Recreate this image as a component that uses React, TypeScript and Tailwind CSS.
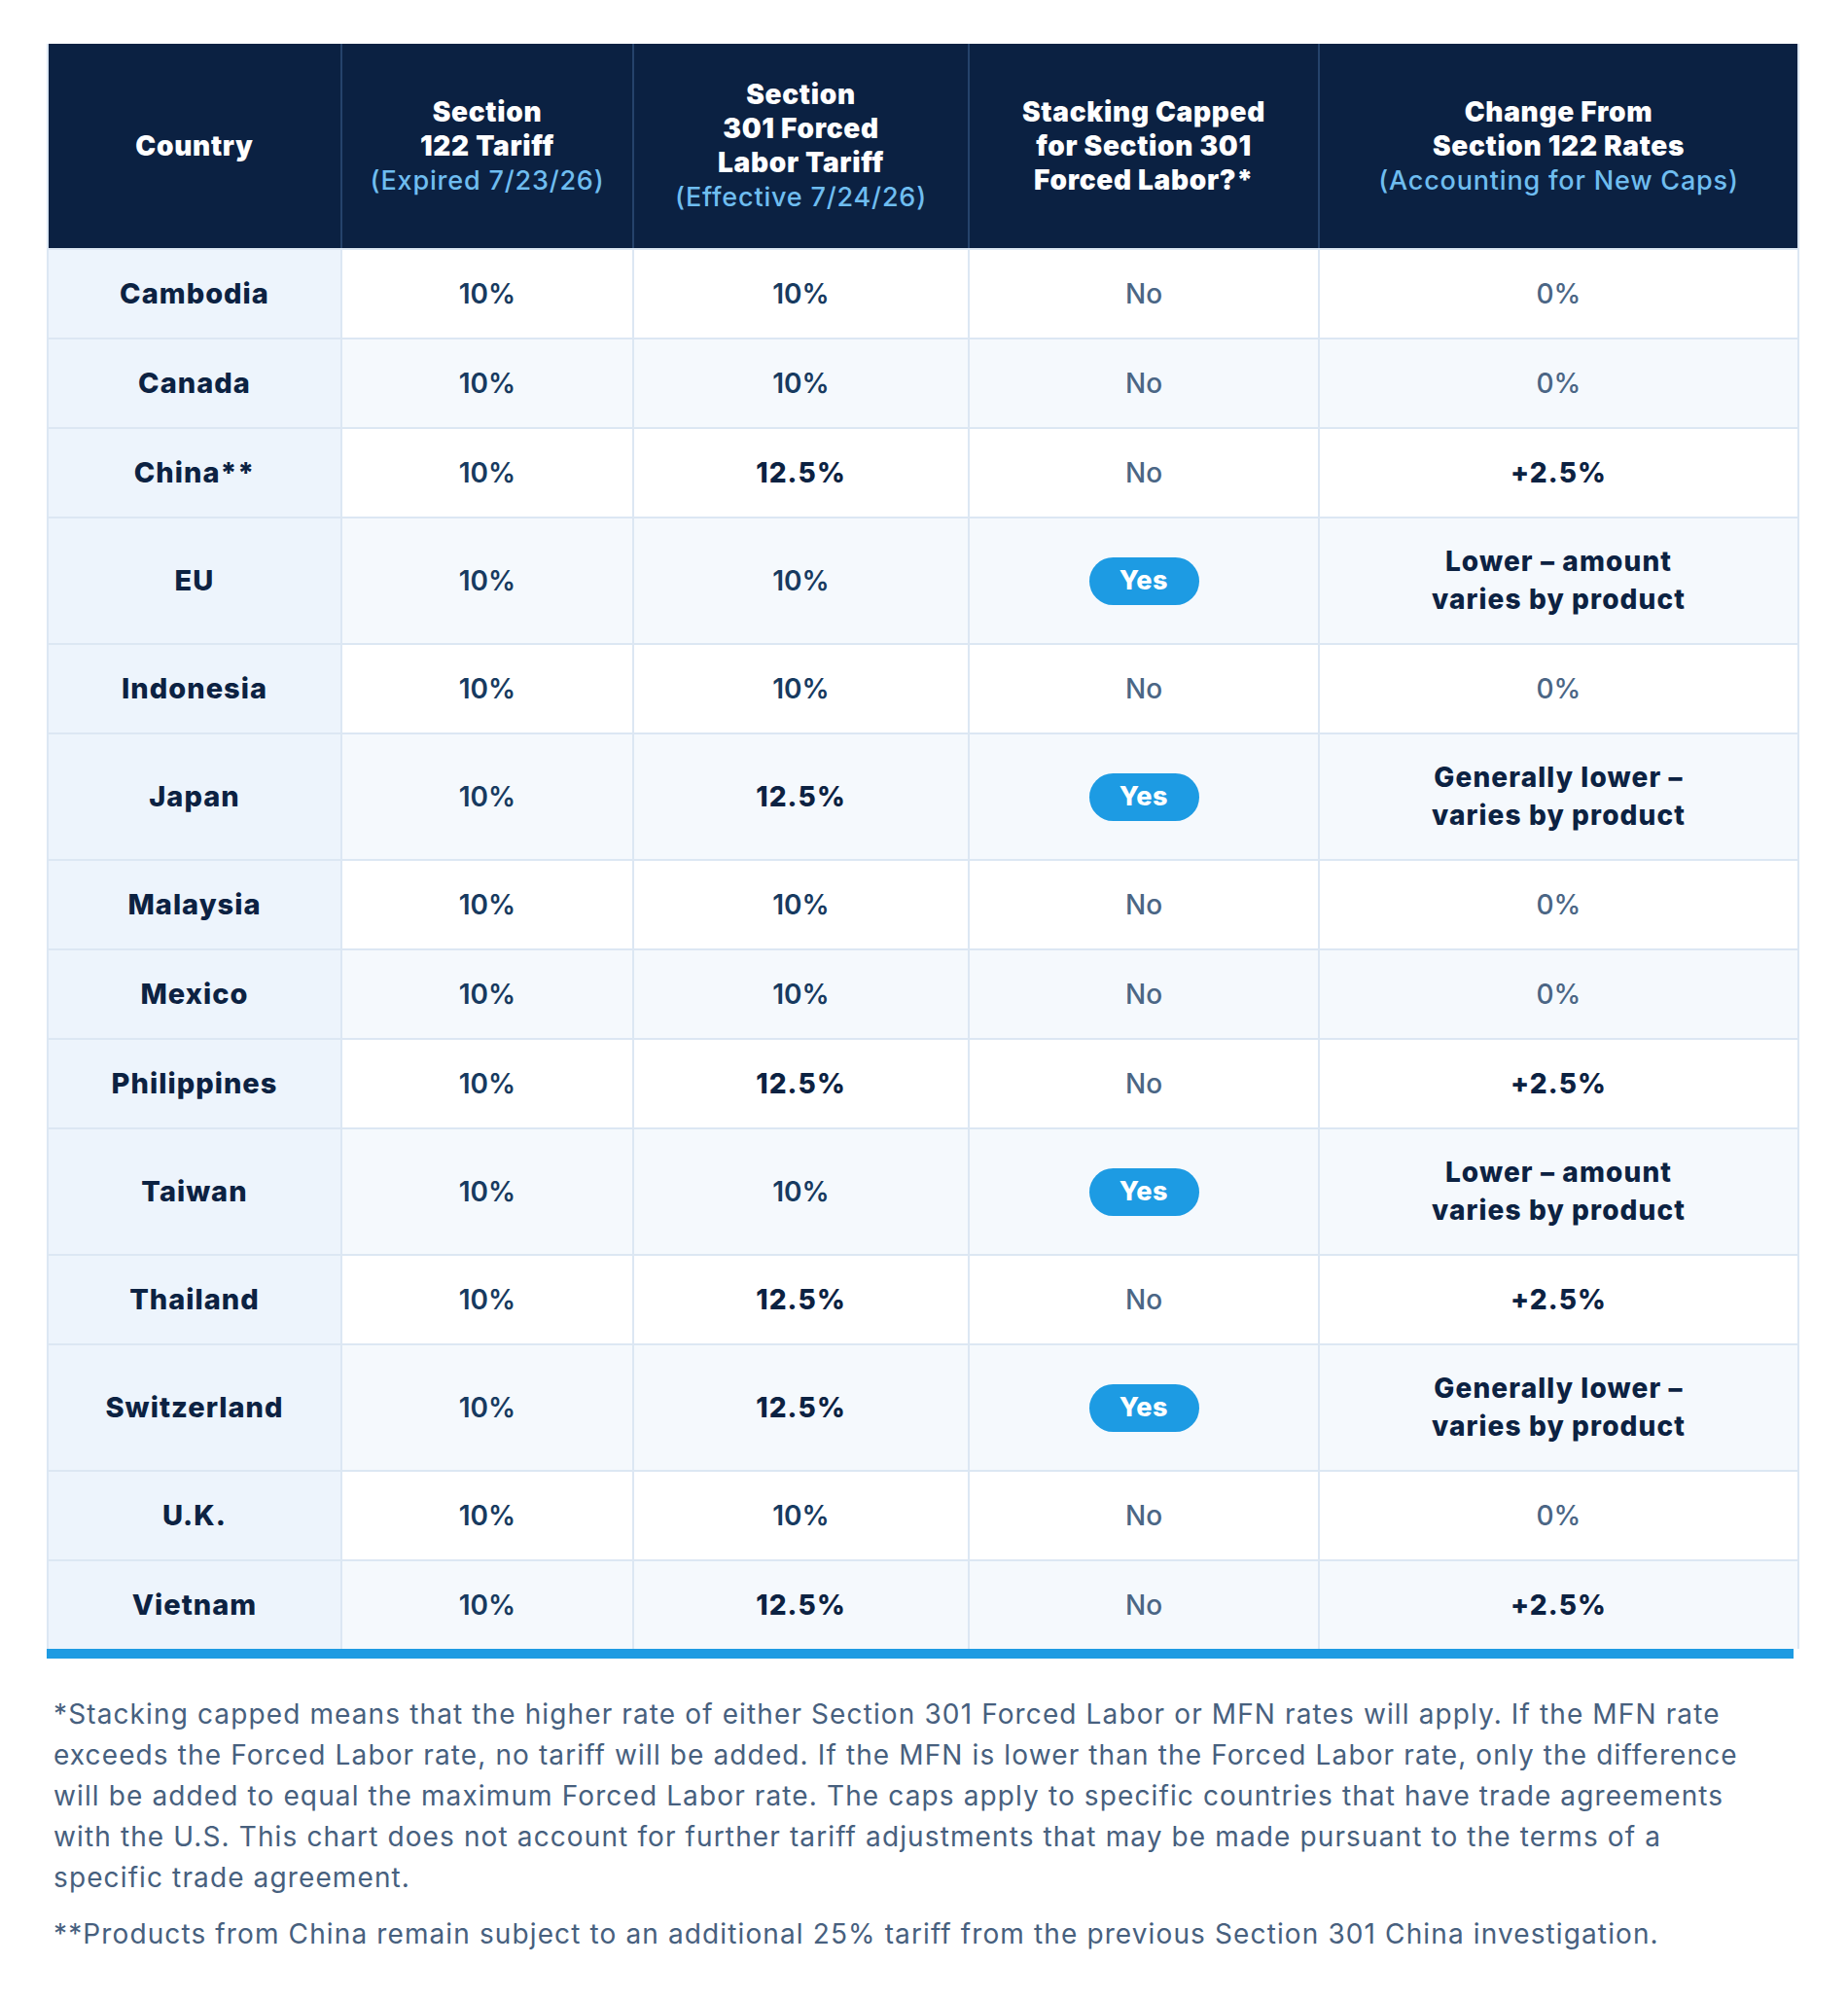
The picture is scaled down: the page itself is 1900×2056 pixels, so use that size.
const cols = 'grid grid-cols-[300px_300px_345px_360px_493px]';

type Row = {
  country: string;
  s122: string;
  s301: string;
  capped: boolean;
  change: string[];
  tall?: boolean;
};

const rows: Row[] = [
  { country: 'Cambodia', s122: '10%', s301: '10%', capped: false, change: ['0%'] },
  { country: 'Canada', s122: '10%', s301: '10%', capped: false, change: ['0%'] },
  { country: 'China**', s122: '10%', s301: '12.5%', capped: false, change: ['+2.5%'] },
  { country: 'EU', s122: '10%', s301: '10%', capped: true, change: ['Lower – amount', 'varies by product'], tall: true },
  { country: 'Indonesia', s122: '10%', s301: '10%', capped: false, change: ['0%'] },
  { country: 'Japan', s122: '10%', s301: '12.5%', capped: true, change: ['Generally lower –', 'varies by product'], tall: true },
  { country: 'Malaysia', s122: '10%', s301: '10%', capped: false, change: ['0%'] },
  { country: 'Mexico', s122: '10%', s301: '10%', capped: false, change: ['0%'] },
  { country: 'Philippines', s122: '10%', s301: '12.5%', capped: false, change: ['+2.5%'] },
  { country: 'Taiwan', s122: '10%', s301: '10%', capped: true, change: ['Lower – amount', 'varies by product'], tall: true },
  { country: 'Thailand', s122: '10%', s301: '12.5%', capped: false, change: ['+2.5%'] },
  { country: 'Switzerland', s122: '10%', s301: '12.5%', capped: true, change: ['Generally lower –', 'varies by product'], tall: true },
  { country: 'U.K.', s122: '10%', s301: '10%', capped: false, change: ['0%'] },
  { country: 'Vietnam', s122: '10%', s301: '12.5%', capped: false, change: ['+2.5%'] },
];

function HeadCell({ lines, sub, first }: { lines: string[]; sub?: string; first?: boolean }) {
  return (
    <div
      className={`flex flex-col items-center justify-center text-center ${first ? '' : 'border-l-2 border-[#25436b]'}`}
    >
      {lines.map((l) => (
        <span key={l} className="text-[28px] leading-[35px] font-black tracking-[0.025em] text-white">
          {l}
        </span>
      ))}
      {sub && (
        <span className="text-[27px] leading-[35px] font-medium tracking-[0.03em] text-[#6fbdf0]">{sub}</span>
      )}
    </div>
  );
}

function BodyRow({ row, alt }: { row: Row; alt: boolean }) {
  const bg = alt ? 'bg-[#f5f9fd]' : 'bg-white';
  const cell = `flex items-center justify-center text-center border-l-2 border-[#dce7f3] ${bg}`;
  const bold301 = row.s301 !== '10%';
  const boldChange = row.change[0] !== '0%';

  return (
    <div className={`${cols} border-t-2 border-[#dce7f3] ${row.tall ? 'h-[130px]' : 'h-[92px]'}`}>
      <div className="flex items-center justify-center bg-[#edf4fc] text-[29px] font-extrabold tracking-[0.035em] text-[#0c2242]">
        {row.country}
      </div>
      <div className={`${cell} text-[28px] font-semibold text-[#173a60]`}>{row.s122}</div>
      <div
        className={`${cell} text-[28px] ${
          bold301 ? 'font-extrabold tracking-[0.04em] text-[#0c2242]' : 'font-semibold text-[#173a60]'
        }`}
      >
        {row.s301}
      </div>
      <div className={cell}>
        {row.capped ? (
          <span className="flex h-[49px] w-[113px] items-center justify-center rounded-full bg-[#1d9be3] text-[27px] font-extrabold tracking-[0.02em] text-white">
            Yes
          </span>
        ) : (
          <span className="text-[28px] font-medium text-[#4b6685]">No</span>
        )}
      </div>
      <div className={`${cell} flex-col`}>
        {row.change.map((c) => (
          <span
            key={c}
            className={`text-[28px] leading-[39px] ${
              boldChange ? 'font-extrabold tracking-[0.04em] text-[#0c2242]' : 'font-medium text-[#4b6685]'
            }`}
          >
            {c}
          </span>
        ))}
      </div>
    </div>
  );
}

export default function App() {
  return (
    <div className="min-h-screen bg-white font-['Inter',sans-serif]">
      <div className="pl-[48px] pt-[45px] pr-[50px]">
        <div className="w-[1802px] border-x-2 border-[#dce7f3]">
          <div className={`${cols} h-[210px] bg-[#0b2142]`}>
            <HeadCell lines={['Country']} first />
            <HeadCell lines={['Section', '122 Tariff']} sub="(Expired 7/23/26)" />
            <HeadCell lines={['Section', '301 Forced', 'Labor Tariff']} sub="(Effective 7/24/26)" />
            <HeadCell lines={['Stacking Capped', 'for Section 301', 'Forced Labor?*']} />
            <HeadCell lines={['Change From', 'Section 122 Rates']} sub="(Accounting for New Caps)" />
          </div>
          {rows.map((r, i) => (
            <BodyRow key={r.country} row={r} alt={i % 2 === 1} />
          ))}
        </div>
        <div className="h-[10px] w-[1796px] bg-[#1e9be2]" />

        <div className="mt-[36px] pl-[7px] text-[28px] leading-[42px] tracking-[0.04em] text-[#47607e]">
          <p>
            *Stacking capped means that the higher rate of either Section 301 Forced Labor or MFN rates will apply. If the MFN rate
            <br />
            exceeds the Forced Labor rate, no tariff will be added. If the MFN is lower than the Forced Labor rate, only the difference
            <br />
            will be added to equal the maximum Forced Labor rate. The caps apply to specific countries that have trade agreements
            <br />
            with the U.S. This chart does not account for further tariff adjustments that may be made pursuant to the terms of a
            <br />
            specific trade agreement.
          </p>
          <p className="mt-[16px]">
            **Products from China remain subject to an additional 25% tariff from the previous Section 301 China investigation.
          </p>
        </div>
      </div>
    </div>
  );
}
